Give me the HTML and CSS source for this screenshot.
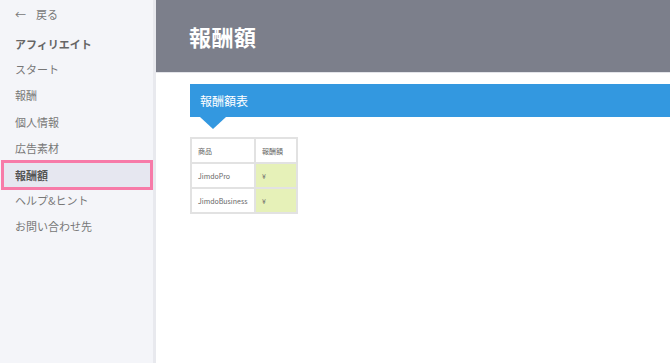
FILE: index.html
```html
<!DOCTYPE html>
<html lang="ja">
<head>
    <meta charset="UTF-8">
    <meta name="viewport" content="width=device-width, initial-scale=1.0">
    <title>報酬額</title>
    <link rel="stylesheet" href="styles.css">
</head>
<body>
<div class="layout">
    <nav class="sidebar">
        <a class="back" href="#"><span class="arrow">←</span>戻る</a>
        <div class="nav-title">アフィリエイト</div>
        <a class="nav-item" href="#">スタート</a>
        <a class="nav-item" href="#">報酬</a>
        <a class="nav-item" href="#">個人情報</a>
        <a class="nav-item" href="#">広告素材</a>
        <a class="nav-item active" href="#">報酬額</a>
        <a class="nav-item" href="#">ヘルプ&amp;ヒント</a>
        <a class="nav-item" href="#">お問い合わせ先</a>
    </nav>
    <main class="main">
        <header class="page-header">
            <h1>報酬額</h1>
        </header>
        <section class="content">
            <h2 class="section-title">報酬額表</h2>
            <table class="rates">
                <colgroup>
                    <col class="col-name">
                    <col class="col-amount">
                </colgroup>
                <tr>
                    <td>商品</td>
                    <td>報酬額</td>
                </tr>
                <tr>
                    <td>JimdoPro</td>
                    <td class="amount">¥</td>
                </tr>
                <tr>
                    <td>JimdoBusiness</td>
                    <td class="amount">¥</td>
                </tr>
            </table>
        </section>
    </main>
</div>
</body>
</html>
```

FILE: styles.css
```css
body {
    margin: 0;
    font-family: "Noto Sans CJK JP", "Noto Sans", sans-serif;
    color: #666;
    background: #fff;
}
.layout {
    display: flex;
    height: 363px;
    overflow: hidden;
}
.sidebar {
    width: 153px;
    flex-shrink: 0;
    background: #f4f5f9;
    border-right: 3px solid #e8e9ee;
    display: flex;
    flex-direction: column;
    padding-top: 5px;
}
.sidebar a {
    text-decoration: none;
    color: #777;
}
.back {
    font-size: 11px;
    line-height: 18px;
    padding: 0 0 0 15px;
}
.back .arrow {
    margin-right: 10px;
}
.nav-title {
    font-size: 11px;
    font-weight: bold;
    line-height: 18px;
    padding: 12px 0 0 15px;
    margin-bottom: 3px;
    color: #666;
}
.nav-item {
    font-size: 11px;
    height: 26.3px;
    line-height: 26px;
    padding-left: 15px;
    box-sizing: border-box;
}
.nav-item.active {
    height: 30px;
    line-height: 24px;
    margin: -1.5px 0 -2.5px 1px;
    background: #e6e7f0;
    border: 3px solid #f77ba8;
    padding-left: 11px;
    font-weight: bold;
    color: #555;
}
.main {
    flex: 1;
}
.page-header {
    height: 72px;
    background: #7c7f8b;
    border-bottom: 1px solid #e3e4e9;
    display: flex;
    align-items: center;
    padding-left: 33px;
}
.page-header h1 {
    margin: 0;
    color: #fff;
    font-size: 22px;
    font-weight: bold;
    letter-spacing: 0.5px;
}
.content {
    padding: 11px 0 0 34px;
}
.section-title {
    position: relative;
    margin: 0;
    height: 33px;
    background: #3398e0;
    color: #fff;
    font-size: 12px;
    font-weight: normal;
    line-height: 33px;
    padding-left: 10px;
}
.section-title::after {
    content: "";
    position: absolute;
    left: 10px;
    top: 33px;
    border-left: 13px solid transparent;
    border-right: 13px solid transparent;
    border-top: 12px solid #3398e0;
}
.rates {
    margin-top: 20px;
    width: 106px;
    table-layout: fixed;
    border-collapse: collapse;
    font-size: 7px;
    color: #666;
}
.col-name {
    width: 64px;
}
.col-amount {
    width: 42px;
}
.rates td {
    border: 2px solid #e2e2e2;
    height: 25px;
    box-sizing: border-box;
    padding: 0 0 0 6px;
    white-space: nowrap;
}
.rates .amount {
    background: #e6f1b8;
}
```
